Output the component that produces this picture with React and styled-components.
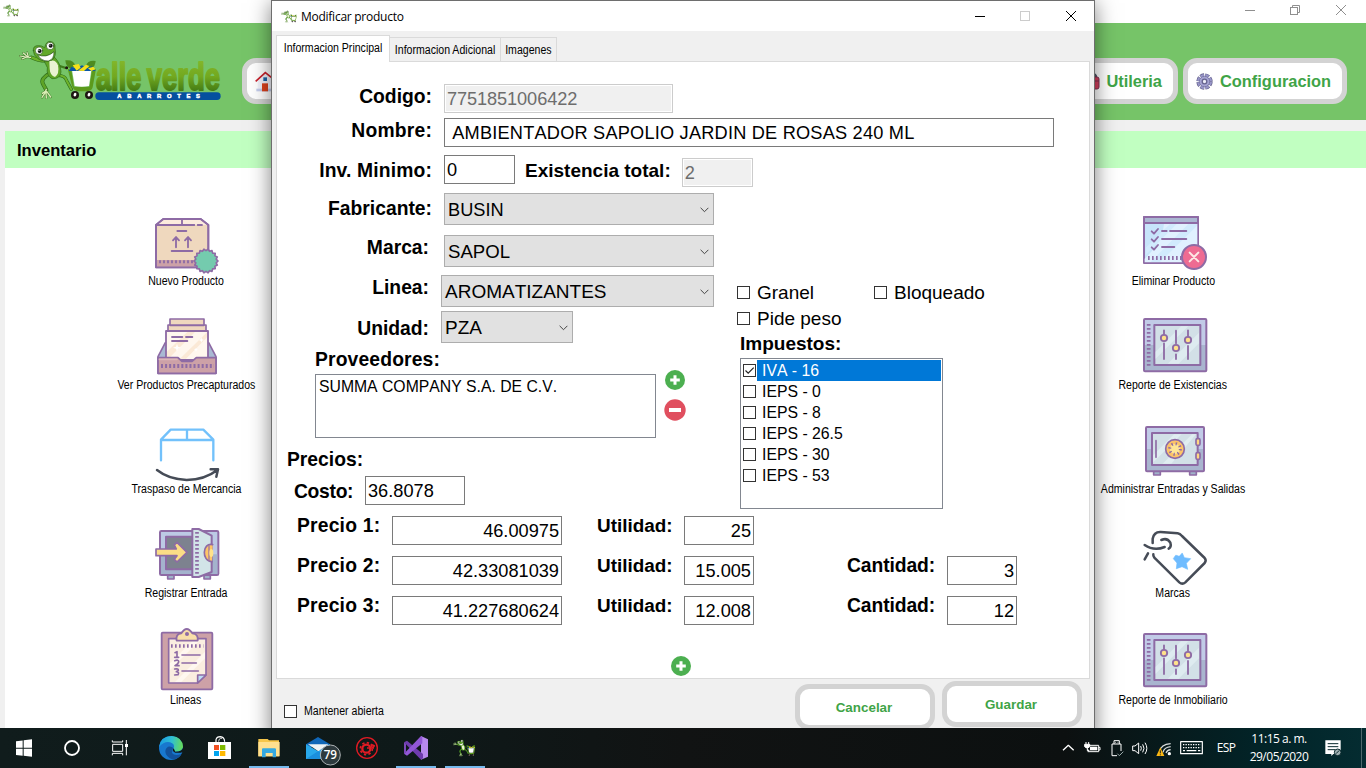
import React from "react";
import styled, { createGlobalStyle } from "styled-components";

const Global = createGlobalStyle`
  * { box-sizing: border-box; }
  body { margin: 0; overflow: hidden; font-family: "Liberation Sans", Arial, sans-serif; color: #000; }
  svg { display: block; flex: none; }
`;

/* ---------- window frame ---------- */
const Screen = styled.div`
  width: 1366px; height: 768px; position: relative; overflow: hidden;
  display: flex; flex-direction: column; background: #f0f0f0;
`;
const MainTitle = styled.div`
  height: 23px; flex: none; background: #fff; display: flex; justify-content: space-between; padding-left: 3px;
`;
const Header = styled.header`
  height: 97px; flex: none; background: #76c468; display: flex; align-items: flex-start; padding: 17px 19px 0 18px;
`;
const NavButton = styled.div`
  height: 46px; width: ${p => p.$w}px; margin: 18px 0 0 ${p => p.$ml || 0}px; flex: none;
  border: 5px solid #d3d3d3; border-radius: 14px; background: #fff;
  display: flex; align-items: center; justify-content: ${p => p.$end ? "flex-end" : "flex-start"};
  padding: 0 11px 0 8px; gap: ${p => p.$gap || 6}px;
  font-weight: bold; font-size: 16.4px; color: #3fa447; white-space: nowrap;
`;
const Spacer = styled.div`flex: 1;`;
const Page = styled.main`
  margin: 11px 0 0 5px; height: 597px; flex: none; background: #fff; display: flex; flex-direction: column;
`;
const PageTitle = styled.h1`
  margin: 0; height: 37px; flex: none; background: #c1ffc1; padding-left: 12px; line-height: 39px; font-size: 16.6px;
`;
const Columns = styled.div`
  flex: 1; display: flex; justify-content: space-between; padding: 41px 93px 0 81px; min-height: 0;
`;
const Column = styled.div`width: 200px; display: flex; flex-direction: column; align-items: center;`;
const Tile = styled.div`
  height: 104px; flex: none; margin-top: ${p => p.$mt || 0}px; display: flex; flex-direction: column; align-items: center;
  svg { overflow: visible; }
`;
const Small = styled.span`
  display: inline-block; font-size: 12px; line-height: 16px; white-space: nowrap;
  transform: scaleX(.88); transform-origin: ${p => p.$origin || "center"};
`;

/* ---------- dialog ---------- */
const Dialog = styled.section`
  position: absolute; left: 271px; top: 0; width: 824px; height: 740px;
  border: 1px solid #6e6e6e; background: #f0f0f0; box-shadow: 0 3px 20px rgba(0,0,0,.5);
  display: flex; flex-direction: column;
`;
const DialogTitle = styled.div`
  height: 30px; background: #fff; display: flex; align-items: center; padding-left: 9px; flex: none;
  font-family: "Open Sans", "Noto Sans", sans-serif; font-size: 12px; letter-spacing: -.26px;
  span { margin-left: 4px; flex: 1; }
`;
const Tabs = styled.div`height: 30px; padding: 4px 0 0 4px; display: flex; align-items: flex-end; flex: none;`;
const Tab = styled.div`
  width: ${p => p.$w}px; height: ${p => p.$on ? 27 : 24}px; border: 1px solid #dadada; border-bottom: 0;
  border-left-width: ${p => p.$on ? 1 : 0}px; margin-bottom: ${p => p.$on ? -1 : 0}px;
  background: ${p => p.$on ? "#fff" : "#f0f0f0"}; position: relative; z-index: 1;
  display: flex; justify-content: center; align-items: center; padding-bottom: ${p => p.$on ? 2 : 0}px;
`;
const Panel = styled.div`
  margin: 0 4px; height: 618px; background: #fff; border: 1px solid #dadada; padding-top: 22px; flex: none;
`;
const Footer = styled.div`
  height: 61px; display: flex; align-items: flex-start; padding: 0 12px; flex: none;
`;
const KeepOpen = styled.div`display: flex; align-items: center; gap: 7px; height: 16px; margin-top: 24px;`;
const FooterButton = styled.div`
  width: 140px; height: 46px; margin: ${p => p.$mt}px 0 0 ${p => p.$ml}px; border: 5px solid #d3d3d3;
  border-radius: 14px; background: #fff; display: flex; align-items: center; justify-content: center;
  padding-right: 2px; font-weight: bold; font-size: 13.4px; color: #3fa447;
`;

/* ---------- form parts ---------- */
const Row = styled.div`display: flex; align-items: flex-start; margin-top: ${p => p.$mt || 0}px;`;
const Label = styled.div`
  width: ${p => (p.$w ? p.$w + "px" : "auto")}; margin: ${p => p.$mt || 0}px ${p => p.$mr || 0}px 0 ${p => p.$ml || 0}px;
  text-align: ${p => (p.$left ? "left" : "right")}; font-weight: bold; font-size: ${p => p.$fs || 19.3}px;
  height: 22px; line-height: 24px; white-space: nowrap; flex: none; letter-spacing: ${p => p.$ls || 0}px;
`;
const Input = styled.div`
  width: ${p => p.$w}px; height: 29px; margin: ${p => p.$mt || 0}px 0 0 ${p => p.$ml || 0}px; flex: none;
  border: 1px solid ${p => (p.$off ? "#cccccc" : "#7a7a7a")}; background: ${p => (p.$off ? "#f0f0f0" : "#fff")};
  box-shadow: ${p => (p.$off ? "inset 0 0 0 1px #fff" : "none")};
  color: ${p => (p.$off ? "#6d6d6d" : "#000")}; padding: 0 2px; line-height: 28px; white-space: pre;
  font-size: 18.2px; font-kerning: none; text-align: ${p => (p.$right ? "right" : "left")};
  letter-spacing: ${p => p.$ls || 0}px;
`;
const SelectBox = styled.div`
  width: ${p => p.$w}px; height: 32px; border: 1px solid #adadad; background: #e1e1e1; flex: none;
  display: flex; align-items: flex-start; justify-content: space-between; padding: 0 4px 0 3px;
  font-size: ${p => p.$fs || 18.6}px; font-kerning: none; line-height: 32px;
  svg { margin-top: 13px; }
`;
const Split = styled.div`display: flex; margin-top: 10px; height: 274px;`;
const Left = styled.div`width: 460px;`;
const Right = styled.div`padding-top: 47px;`;
const ListBox = styled.div`
  width: 341px; height: 64px; margin: 4px 0 0 38px; border: 1px solid #828790; padding: 2px 3px; flex: none;
  font-size: 15.75px; line-height: 20px; font-kerning: none;
`;
const IconStack = styled.div`display: flex; flex-direction: column; align-items: center; gap: 9px; margin-left: 8px;`;
const CheckLine = styled.div`
  display: flex; height: ${p => p.$h || 26}px; width: ${p => (p.$w ? p.$w + "px" : "auto")};
  font-size: 19px; line-height: 22px; gap: 7px; white-space: nowrap;
  svg { margin-top: 4px; }
`;
const CheckList = styled.div`
  width: 203px; height: 151px; margin: 4px 0 0 3px; border: 1px solid #828790; padding: 1px 1px 0 2px;
`;
const CheckItem = styled.div`
  display: flex; height: 21px; align-items: center; font-size: 15.8px; font-kerning: none; gap: 1px;
  span { flex: 1; padding-left: 5px; line-height: 21px; background: ${p => (p.$on ? "#0078d7" : "transparent")}; color: ${p => (p.$on ? "#fff" : "#000")}; }
`;
const Prices = styled.div`display: flex; flex-direction: column; gap: 11px; margin: 7px 0 0 20px;`;
const AddPrice = styled.div`margin: 31px 0 0 394px;`;

/* ---------- taskbar ---------- */
const Taskbar = styled.footer`
  height: 40px; flex: none; position: relative; z-index: 2; display: flex; color: #fff;
  background: linear-gradient(90deg, #101c1c 0, #0e1919 30%, #111313 50%, #0c1010 78%, #022327 92%, #042c31 100%);
`;
const Slot = styled.div`
  width: ${p => p.$w}px; height: 40px; margin-left: ${p => p.$ml || 0}px; flex: none;
  background: ${p => (p.$open ? "linear-gradient(#76b9ed, #76b9ed) 4px 38px / 40px 2px no-repeat" : "none")};
`;
const Lang = styled.div`
  width: 32px; flex: none; text-align: center; font: 12px/40px "Open Sans", "Noto Sans", sans-serif; letter-spacing: -.7px;
`;
const Clock = styled.div`
  width: 70px; flex: none; margin: 0 5px 0 2px; padding-top: 2px; text-align: center; white-space: nowrap;
  font: 12px/18px "Open Sans", "Noto Sans", sans-serif; letter-spacing: -.5px;
`;
const PeekLine = styled.div`margin-left: 12px; width: 5px; border-left: 1px solid #4d6a6d;`;

/* ---------- drawings ---------- */
const P = "#8e6ba5";
const Art = ({ w = 64, h = 64, vb, children }) => (
  <svg width={w} height={h} viewBox={vb} fill="none" strokeLinecap="round" strokeLinejoin="round">{children}</svg>
);

const FrogCart = () => (
  <g strokeLinecap="round" strokeLinejoin="round">
    <path d="M145 182 Q118 184 94 172" stroke="#2f6d1a" strokeWidth="11" fill="none" />
    <path d="M145 182 Q118 184 94 172" stroke="#6eb32b" strokeWidth="7" fill="none" />
    <path d="M92 172 L78 171 L60 168 M80 171 L66 177 M82 170 L70 159 M85 170 L81 157" stroke="#3b6f22" strokeWidth="6" fill="none" />
    <path d="M92 172 L78 171 L60 168 M80 171 L66 177 M82 170 L70 159 M85 170 L81 157" stroke="#e8f3c8" strokeWidth="3.4" fill="none" />
    <path d="M150 220 Q120 236 129 252 L139 270" stroke="#2f6d1a" strokeWidth="12" fill="none" />
    <path d="M150 220 Q120 236 129 252 L139 270" stroke="#5fa427" strokeWidth="8" fill="none" />
    <path d="M139 268 L134 280 L126 292 M138 276 L139 294 M140 274 L152 291 M136 274 L127 280" stroke="#3b6f22" strokeWidth="6.5" fill="none" />
    <path d="M139 268 L134 280 L126 292 M138 276 L139 294 M140 274 L152 291 M136 274 L127 280" stroke="#dbeeb6" strokeWidth="4" fill="none" />
    <path d="M172 226 Q196 226 200 242 L214 268" stroke="#2f6d1a" strokeWidth="10" fill="none" />
    <path d="M172 226 Q196 226 200 242 L214 268" stroke="#6eb32b" strokeWidth="6" fill="none" />
    <path d="M172 196 L198 204" stroke="#3f7d1d" strokeWidth="7" />
    <path d="M132 180 Q142 174 164 172 Q182 190 183 216 Q180 238 156 236 Q138 226 142 204Z" fill="#5fa427" stroke="#2f6d1a" strokeWidth="2" />
    <path d="M148 184 Q166 176 174 196 Q179 222 165 231 Q150 226 149 206Z" fill="#eaf2d2" />
    <path d="M100 152 Q98 136 116 137 Q124 136 134 143 Q138 124 150 124 Q166 126 165 144 Q170 170 156 180 Q132 188 114 176 Q100 166 100 152Z" fill="#62a92a" stroke="#2d6519" strokeWidth="2" />
    <path d="M113 164 Q138 176 162 155 Q163 178 145 183 Q123 184 113 164Z" fill="#fff" stroke="#254d18" strokeWidth="2" />
    <circle cx="117" cy="152" r="11" fill="#fff" stroke="#2d5a1b" strokeWidth="2" />
    <circle cx="150" cy="138" r="11" fill="#fff" stroke="#2d5a1b" strokeWidth="2" />
    <circle cx="119" cy="153" r="6" fill="#111" /><circle cx="152" cy="137" r="6" fill="#111" />
    <circle cx="117" cy="151" r="1.8" fill="#fff" /><circle cx="150" cy="135" r="1.8" fill="#fff" />
    <path d="M196 181 Q222 178 226 198 L210 206 Q197 198 196 181Z M287 183 Q262 180 258 198 L274 208 Q286 198 287 183Z" fill="#4e8c1f" />
    <path d="M203 206 L216 258 Q220 272 236 274 L262 274 Q276 272 278 262 L288 206 L276 210 L268 260 L222 260 L214 210Z" fill="#5c9a1c" />
    <path d="M216 210 L274 210 L267 258 Q245 262 224 258Z" fill="#fff" />
    <path d="M206 213 L214 201 L230 204 L246 196 L262 204 L276 199 L287 213Z" fill="#0b56a4" />
    <path d="M218 196 L236 192 L242 203 L230 212Z M234 212 L258 194 L268 198 L252 213Z M264 205 L280 200 L286 208 L274 213Z" fill="#f6e019" />
    <circle cx="200" cy="203" r="4.5" fill="#20170f" />
    <g fill="#1d1712"><ellipse cx="225" cy="285" rx="12" ry="12" /><ellipse cx="267" cy="285" rx="12" ry="12" /></g>
    <g fill="#fff"><ellipse cx="225" cy="284" rx="4" ry="5.5" transform="rotate(25 225 284)" /><ellipse cx="267" cy="284" rx="4" ry="5.5" transform="rotate(25 267 284)" /></g>
  </g>
);

const Logo = () => (
  <svg width="206" height="62" viewBox="54 120 618 186" overflow="visible">
    <defs>
      <linearGradient id="lg" x1="0" y1="185" x2="0" y2="275" gradientUnits="userSpaceOnUse">
        <stop offset="0" stopColor="#82b52a" /><stop offset=".5" stopColor="#72a81f" /><stop offset="1" stopColor="#417a14" />
      </linearGradient>
    </defs>
    <FrogCart />
    <g fill="url(#lg)" stroke="url(#lg)" strokeWidth="6" strokeLinejoin="round" fontFamily="Liberation Sans" fontWeight="bold" fontSize="117">
      <text x="288" y="270" textLength="136" lengthAdjust="spacingAndGlyphs">alle</text>
      <text x="440" y="270" textLength="220" lengthAdjust="spacingAndGlyphs">verde</text>
    </g>
    <rect x="286" y="277" width="376" height="23" rx="11" fill="#05509f" />
    <text x="352" y="294" textLength="248" fill="#fff" stroke="#fff" strokeWidth="1.4" fontFamily="Liberation Sans" fontWeight="bold" fontSize="17.500">ABARROTES</text>
  </svg>
);

const MiniFrog = () => <svg width="16" height="13" viewBox="54 116 240 188"><FrogCart /></svg>;

const BoxIcon = () => {
  const pts = Array.from({ length: 36 }, (_, i) => {
    const a = (i * Math.PI) / 18, r = i % 2 ? 31 : 36;
    return `${318 + r * Math.cos(a)},${183 + r * Math.sin(a)}`;
  }).join(" ");
  return (
    <Art vb="162 27 192 192">
      <path d="M168 75 L190 57 H302 L325 75 V202 H168Z" fill="#efd8be" stroke={P} strokeWidth="5.500" />
      <path d="M171 75 L191 60 H301 L322 75Z" fill="#fcebdd" />
      <path d="M170 180 H322 V200 H170Z" fill="#cda1a7" />
      <path d="M168 75 L190 57 H302 L325 75 V202 H168Z M168 75 H283 M293 75 H306 M246 58 V74 M232 93 H259 M215 153 H277 M228 142 V112 M219 121 L228 111 L237 121 M264 142 V112 M255 121 L264 111 L273 121" stroke={P} strokeWidth="5.500" />
      <path d="M180 181 V190 M192 181 V190 M204 181 V190 M216 181 V190 M228 181 V190 M240 181 V190 M252 181 V190 M264 181 V190 M276 181 V190" stroke={P} strokeWidth="5.500" strokeLinecap="butt" />
      <polygon points={pts} fill="#74cbae" stroke={P} strokeWidth="5" />
    </Art>
  );
};
const TrayIcon = () => (
  <Art vb="162 339 192 192">
    <path d="M196 428 L174 470 V520 H348 V470 L326 428Z" fill="#a9b9d3" stroke={P} strokeWidth="5" />
    <path d="M210 357 H312 V376 H210Z M204 375 H318 V394 H204Z" fill="#efd8be" stroke={P} strokeWidth="5" />
    <path d="M198 393 H324 V480 H198Z" fill="#fff7ee" stroke={P} strokeWidth="5.500" />
    <path d="M201 455 L262 396 H285 L205 476 H201Z M240 476 L321 397 V412 L258 476Z" fill="#fbe9d6" />
    <path d="M174 473 H234 L246 484 H276 L289 473 H348 V520 H174Z" fill="#cda1a7" stroke={P} strokeWidth="5.500" />
    <path d="M178 478 H231" stroke="#dbb5b8" strokeWidth="5" />
    <path d="M216 411 H247 M258 411 H277 M216 423 H262" stroke={P} strokeWidth="5.500" />
    <path d="M231 431 L234 440 L243 443 L234 446 L231 455 L228 446 L219 443 L228 440Z M304 412 l2 6 6 2 -6 2 -2 6 -2-6 -6-2 6-2Z M288 443l2 4 4 2-4 2-2 4-2-4-4-2 4-2Z" fill="#fff" />
    <path d="M183 498 H342" stroke={P} strokeWidth="12" strokeDasharray="6 6.200" strokeLinecap="butt" />
  </Art>
);
const TransferIcon = () => (
  <Art vb="162 21 192 192">
    <path d="M183 151 V89 L212 59 H310 L340 89 V151 M184 90 H339 M261 60 V88" stroke="#72c1fb" strokeWidth="7" />
    <path d="M171 180 Q206 208 260 210 Q315 209 352 180 M332 178 L354 178 L349 200" stroke="#464c57" strokeWidth="7.500" />
  </Art>
);
const EntryIcon = () => (
  <Art vb="162 333 192 192">
    <path d="M203 496 V507 H222 V496 M312 496 V507 H331 V496" fill="#9fb2c9" stroke={P} strokeWidth="5" />
    <rect x="180" y="363" width="175" height="132" rx="4" fill="#bccae5" stroke={P} strokeWidth="6" />
    <path d="M183 433 H352 V492 H183Z" fill="#a4b3cd" />
    <rect x="198" y="380" width="84" height="98" fill="#7d828f" stroke={P} strokeWidth="6" />
    <path d="M277 357 H296 L335 377 V486 L296 501 H277Z" fill="#d2e4e8" stroke={P} strokeWidth="6" />
    <path d="M291 366 V496" stroke={P} strokeWidth="11" strokeDasharray="5 7" strokeLinecap="butt" />
    <path d="M338 404 C306 396 304 455 336 455" fill="#ffc567" stroke={P} strokeWidth="5" />
    <path d="M327 408 V450" stroke="#9d76a4" strokeWidth="4" />
    <ellipse cx="334" cy="429" rx="6" ry="12" fill="#ffe28a" />
    <path d="M168 417 H229 L223 405 L231 397 L261 427 L231 456 L223 448 L231 437 H168Z" fill="#fbdd86" stroke={P} strokeWidth="5" />
  </Art>
);
const ClipIcon = () => (
  <Art vb="162 654 192 192">
    <rect x="185" y="668" width="152" height="170" rx="3" fill="#cda1a7" stroke={P} strokeWidth="5.500" />
    <path d="M206 686 H318 V795 L293 819 H206Z" fill="#faeee0" stroke={P} strokeWidth="5" />
    <path d="M210 760 L280 690 H300 L210 780Z M225 816 L315 725 V745 L244 816Z" fill="#fff8f0" />
    <path d="M293 819 V795 H318Z" fill="#bcdcf5" stroke={P} strokeWidth="5" />
    <path d="M213 708 H310" stroke={P} strokeWidth="11" strokeDasharray="5 7" strokeLinecap="butt" />
    <path d="M230 692 Q226 672 244 670 Q260 644 277 670 Q296 672 293 692Z" fill="#f9dea9" stroke={P} strokeWidth="5.500" />
    <circle cx="261" cy="672" r="6" fill={P} />
    <path d="M246 735 H300 M246 759 H289 M246 783 H295 M225 728 L231 725 V742 M224 742 H236 M224 752 Q236 748 236 755 Q236 760 225 767 H237 M224 777 Q236 775 235 781 L229 785 Q239 787 234 794 L224 795" stroke={P} strokeWidth="5" />
  </Art>
);
const DeleteIcon = () => (
  <Art vb="153 27 192 192">
    <rect x="162" y="51" width="162" height="138" fill="#c7e4fa" stroke={P} strokeWidth="6" />
    <path d="M222 72 H322 V187 H164 V176 Q220 125 222 72Z M165 172 L264 72" fill="#e0f1ff" />
    <path d="M167 165 L260 72 H240 L167 143Z M210 186 L321 77 V72 H295 L182 186Z" fill="#d1eafd" />
    <rect x="162" y="51" width="162" height="18" fill="#aab7d2" stroke={P} strokeWidth="6" />
    <path d="M185 94 L192 101 L204 87 M185 118 L192 125 L204 111 M185 142 L192 149 L204 135 M216 93 H230 M240 93 H289 M216 117 H289 M216 141 H253" stroke={P} strokeWidth="5.500" />
    <path d="M174 174 H276" stroke={P} strokeWidth="12" strokeDasharray="5 7" strokeLinecap="butt" />
    <circle cx="312" cy="171" r="36" fill="#ee6b92" stroke={P} strokeWidth="6" />
    <path d="M299 158 L325 184 M325 158 L299 184" stroke="#fde9e5" strokeWidth="6" />
  </Art>
);
const SlidersIcon = () => (
  <Art vb="153 339 192 192">
    <rect x="162" y="357" width="187" height="157" rx="3" fill="#c1cbe7" />
    <path d="M162 435 H349 V514 H162Z" fill="#a9b5cf" />
    <rect x="162" y="357" width="187" height="157" rx="3" stroke={P} strokeWidth="6" />
    <rect x="193" y="375" width="138" height="120" fill="#d2e0e7" stroke={P} strokeWidth="6" />
    <path d="M197 455 L273 379 H295 L197 476Z M233 491 L327 398 V430 L266 491Z" fill="#deebf0" />
    <path d="M176 372 V502" stroke={P} strokeWidth="11" strokeDasharray="5 7" strokeLinecap="butt" />
    <path d="M222 391 V402 M222 430 V477 M258 392 V430 M258 463 V477 M294 391 V408 M294 438 V477" stroke={P} strokeWidth="5.500" />
    <g fill="#ffe18a" stroke={P} strokeWidth="5.500"><circle cx="222" cy="414" r="9.500" /><circle cx="258" cy="444" r="9.500" /><circle cx="294" cy="420" r="9.500" /></g>
  </Art>
);
const SafeIcon = () => (
  <Art vb="153 21 192 192">
    <path d="M191 186 V195 H211 V186 M299 186 V195 H319 V186" fill="#9fb2c9" stroke={P} strokeWidth="5" />
    <rect x="168" y="51" width="174" height="133" rx="3" fill="#c1cbe7" />
    <path d="M168 117 H342 V184 H168Z" fill="#a9b5cf" />
    <rect x="168" y="51" width="174" height="133" rx="3" stroke={P} strokeWidth="6" />
    <rect x="186" y="69" width="137" height="96" fill="#d2e0e7" stroke={P} strokeWidth="6" />
    <path d="M190 135 L252 73 H275 L190 157Z M218 161 L306 73 H318 L244 161Z" fill="#e0edf1" />
    <path d="M198 92 V142" stroke={P} strokeWidth="5" />
    <circle cx="255" cy="117" r="28" fill="#fdc468" stroke={P} strokeWidth="5" />
    <circle cx="255" cy="117" r="15" fill="#ffe695" />
    <circle cx="255" cy="117" r="16" stroke={P} strokeWidth="9" strokeDasharray="4 8.570" strokeLinecap="butt" />
    <rect x="318" y="86" width="12" height="20" rx="4" fill="#ffd781" stroke={P} strokeWidth="5" />
    <rect x="318" y="128" width="12" height="20" rx="4" fill="#ffd781" stroke={P} strokeWidth="5" />
  </Art>
);
const TagIcon = () => (
  <Art vb="153 333 192 192">
    <path d="M188 399 V386 Q192 365 212 366 L263 370 Q270 371 276 378 L344 444 Q350 451 344 459 L286 517 Q277 525 268 517 L193 443 Q189 438 190 433" stroke="#464c57" strokeWidth="7.500" />
    <path d="M164 405 Q192 424 224 411 M214 390 Q232 382 241 398 Q245 411 236 416 M174 430 L164 448" stroke="#464c57" strokeWidth="7.500" />
    <path d="M277 430 L283 443 L302 446 L289 460 L293 478 L276 470 L259 476 L261 459 L250 446 L256 437 Q256 434 267 439Z" fill="#6fbcff" stroke="#6fbcff" strokeWidth="2" />
  </Art>
);
const Plus = () => (
  <svg width="20" height="20" viewBox="0 0 20 20"><circle cx="10" cy="10" r="10" fill="#4caf50" /><path d="M10 5.200V14.800M5.200 10H14.800" stroke="#fff" strokeWidth="3" /></svg>
);
const Minus = () => (
  <svg width="22" height="22" viewBox="0 0 22 22"><circle cx="11" cy="11" r="10.700" fill="#e04f5f" /><path d="M5 11H17" stroke="#fff" strokeWidth="4" /></svg>
);
const Check = ({ on }) => (
  <svg width="13" height="13" viewBox="0 0 13 13" fill="none"><rect x=".5" y=".5" width="12" height="12" fill="#fff" stroke="#333" />{on && <path d="M2.500 6.500L5.200 9.200L10.700 3.700" stroke="#222" strokeWidth="1.200" />}</svg>
);
const Arrow = () => <svg width="9" height="6" viewBox="0 0 9 6" fill="none"><path d="M.6 .8L4.500 4.700L8.400 .8" stroke="#444" /></svg>;

const Controls = ({ dialog }) => dialog ? (
  <svg width="138" height="30" viewBox="956 1 138 30" fill="none" stroke="#000">
    <path d="M975 16.500H985M1066 11L1076 21M1076 11L1066 21" /><rect x="1020.500" y="11.500" width="9" height="9" stroke="#ccc" />
  </svg>
) : (
  <svg width="138" height="23" viewBox="1228 0 138 23" fill="none" stroke="#8f8f8f">
    <path d="M1245 10.500H1255M1336 5L1346 15M1346 5L1336 15M1292.500 7V5.500H1299.500V12.500H1298" /><rect x="1290.500" y="7.500" width="7" height="7" />
  </svg>
);
const House = () => (
  <svg width="22" height="22" viewBox="762 212 66 66" fill="none">
    <path d="M770 242L794 222L818 242V272H770Z" fill="#f3f3fb" /><path d="M766 268H828V276H766Z" fill="#c5cdec" />
    <path d="M764 246L793 220L826 246" stroke="#c9202c" strokeWidth="5" /><rect x="787" y="234" width="11" height="11" fill="#1c64a8" />
    <rect x="783" y="252" width="18" height="24" fill="#dd421d" />
  </svg>
);
const ToolBox = () => (
  <svg width="18" height="18" viewBox="0 0 18 18"><path d="M4 5C4 1 14 1 14 5" fill="none" stroke="#4e5566" strokeWidth="2.500" /><rect x="0" y="5" width="17" height="12" rx="2" fill="#d8405f" stroke="#813052" /><path d="M0 9H17" stroke="#813052" /></svg>
);
const Gear = () => (
  <svg width="17" height="17" viewBox="349 220 52 52" fill="none">
    <circle cx="375" cy="246" r="19" stroke="#5e5b86" strokeWidth="12" strokeDasharray="11.500 3.420" />
    <circle cx="375" cy="246" r="19" stroke="#9896c8" strokeWidth="8" strokeDasharray="10 4.920" strokeDashoffset="-.7" />
    <circle cx="375" cy="246" r="16" fill="#a5a3d2" stroke="#7c7aa8" strokeWidth="3" /><circle cx="375" cy="246" r="7" fill="#eeeef8" stroke="#66648f" strokeWidth="4" />
  </svg>
);

const T = ({ x, w, children }) => (
  <svg width={w} height="40" viewBox={`${x * 3} 9 ${w * 3} 120`} fill="none" strokeLinejoin="round">{children}</svg>
);

const LEFT = [
  ["Nuevo Producto", BoxIcon], ["Ver Productos Precapturados", TrayIcon], ["Traspaso de Mercancia", TransferIcon],
  ["Registrar Entrada", EntryIcon], ["Lineas", ClipIcon],
];
const RIGHT = [
  ["Eliminar Producto", DeleteIcon], ["Reporte de Existencias", SlidersIcon], ["Administrar Entradas y Salidas", SafeIcon],
  ["Marcas", TagIcon], ["Reporte de Inmobiliario", SlidersIcon],
];
const Tiles = ({ items }) => (
  <Column>
    {items.map(([text, Icon], i) => (
      <Tile key={text} $mt={i === 4 ? 3 : 0}><Icon /><Small>{text}</Small></Tile>
    ))}
  </Column>
);

const PRICES = [["1", "46.00975", "25"], ["2", "42.33081039", "15.005", "3"], ["3", "41.227680624", "12.008", "12"]];
const TAXES = ["IVA - 16", "IEPS - 0", "IEPS - 8", "IEPS - 26.5", "IEPS - 30", "IEPS - 53"];

const ProductDialog = () => (
  <Dialog>
    <DialogTitle><MiniFrog /><span>Modificar producto</span><Controls dialog /></DialogTitle>
    <Tabs>
      <Tab $w={114} $on><Small>Informacion Principal</Small></Tab>
      <Tab $w={111}><Small>Informacion Adicional</Small></Tab>
      <Tab $w={56}><Small>Imagenes</Small></Tab>
    </Tabs>
    <Panel>
      <Row><Label $w={155} $mt={1} $mr={12}>Codigo:</Label><Input $w={229} $off $ls={-0.1}>7751851006422</Input></Row>
      <Row $mt={5}><Label $w={155} $mt={1} $mr={12} $ls={0.2}>Nombre:</Label><Input $w={610} $ls={0.2}> AMBIENTADOR SAPOLIO JARDIN DE ROSAS 240 ML</Input></Row>
      <Row $mt={8}>
        <Label $w={155} $mt={4} $mr={12} $ls={0.15}>Inv. Minimo:</Label><Input $w={71}>0</Input>
        <Label $mt={4} $ml={10} $mr={11} $fs={19}>Existencia total:</Label><Input $w={71} $mt={3} $off>2</Input>
      </Row>
      <Row $mt={6}><Label $w={155} $mt={4} $mr={12}>Fabricante:</Label><SelectBox $w={270} $fs={18.2}>BUSIN<Arrow /></SelectBox></Row>
      <Split>
        <Left>
          <Row><Label $w={152} $mt={1} $mr={15}>Marca:</Label><SelectBox $w={270}>SAPOL<Arrow /></SelectBox></Row>
          <Row $mt={8}><Label $w={152} $mt={1} $mr={12}>Linea:</Label><SelectBox $w={273} $fs={19}>AROMATIZANTES<Arrow /></SelectBox></Row>
          <Row $mt={4}><Label $w={152} $mt={6} $mr={12}>Unidad:</Label><SelectBox $w={132} $fs={19}>PZA<Arrow /></SelectBox></Row>
          <Row $mt={5}><Label $left $ml={38} $ls={0.15}>Proveedores:</Label></Row>
          <Row>
            <ListBox>SUMMA COMPANY S.A. DE C.V.</ListBox>
            <IconStack><Plus /><Minus /></IconStack>
          </Row>
          <Row $mt={10}><Label $left $ml={10}>Precios:</Label></Row>
          <Row $mt={6}><Label $left $w={71} $mt={4} $ml={17} $ls={-0.3}>Costo:</Label><Input $w={100}>36.8078</Input></Row>
        </Left>
        <Right>
          <Row><CheckLine $w={137}><Check />Granel</CheckLine><CheckLine><Check />Bloqueado</CheckLine></Row>
          <CheckLine $h={24}><Check />Pide peso</CheckLine>
          <Label $left $ml={3} $fs={19}>Impuestos:</Label>
          <CheckList>
            {TAXES.map((t, i) => <CheckItem key={t} $on={i === 0}><Check on={i === 0} /><span>{t}</span></CheckItem>)}
          </CheckList>
        </Right>
      </Split>
      <Prices>
        {PRICES.map(([n, price, profit, qty]) => (
          <Row key={n}>
            <Label $left $w={95} $mt={-2} $ls={0.2}>Precio {n}:</Label><Input $w={170} $right>{price}</Input>
            <Label $left $w={87} $mt={-2} $ml={35} $fs={18.9}>Utilidad:</Label><Input $w={70} $right>{profit}</Input>
            {qty && <><Label $left $w={100} $mt={-2} $ml={93} $ls={-0.1}>Cantidad:</Label><Input $w={70} $right>{qty}</Input></>}
          </Row>
        ))}
      </Prices>
      <AddPrice><Plus /></AddPrice>
    </Panel>
    <Footer>
      <KeepOpen><Check /><Small $origin="left">Mantener abierta</Small></KeepOpen>
      <Spacer />
      <FooterButton $mt={5} $ml={0}>Cancelar</FooterButton>
      <FooterButton $mt={2} $ml={7}>Guardar</FooterButton>
    </Footer>
  </Dialog>
);

const StoreGlyph = () => (
  <><path d="M648 52V44Q650 35 661 35Q673 36 674 50" stroke="#fff" strokeWidth="3.500" /><path d="M656 50Q657 38 666 40" stroke="#fff" strokeWidth="2.500" />
    <path d="M624 51H693V102H624Z" fill="#fff" /><path d="M642 60H657V75H642Z" fill="#f25022" /><path d="M660 60H676V75H660Z" fill="#7fba00" /><path d="M642 78H657V93H642Z" fill="#00a4ef" /><path d="M660 78H676V93H660Z" fill="#ffb900" /></>
);

const TaskbarView = () => (
  <Taskbar>
    <Slot $w={48}><T x={0} w={48}><path d="M48 49L68 46.500V68H48ZM71 46L96 43V68H71ZM48 71H68V92.500L48 90ZM71 71H96V95L71 92.500Z" fill="#fff" /></T></Slot>
    <Slot $w={48}><T x={48} w={48}><circle cx="216" cy="69" r="21" stroke="#fff" strokeWidth="5.500" /></T></Slot>
    <Slot $w={48}><T x={96} w={48}><path d="M337 46V51H368V46M337 91V85H368V91M338 58H368V79H338ZM379 45V91" stroke="#fff" strokeWidth="3" strokeLinejoin="miter" /><rect x="375" y="57" width="9" height="9" fill="#fff" /></T></Slot>
    <Slot $w={49} $ml={3}><T x={147} w={49}>
      <defs><linearGradient id="edge" gradientUnits="userSpaceOnUse" x1="480" y1="50" x2="549" y2="60"><stop stopColor="#1b9de2" /><stop offset=".5" stopColor="#30c0d0" /><stop offset="1" stopColor="#68dc55" /></linearGradient></defs>
      <circle cx="513" cy="69" r="36" fill="#1878cf" />
      <path d="M477 66Q482 33 515 33Q548 36 549 66Q546 80 526 80Q516 76 521 70Q526 57 510 52Q493 48 477 66Z" fill="url(#edge)" />
      <path d="M521 70Q514 78 526 83Q542 85 549 80V101L549 69Q546 80 526 80Z" fill="#101a1a" />
      <path d="M521 70Q514 62 504 65Q492 73 498 88Q507 104 524 103Q540 98 544 87Q524 94 516 84Q514 76 521 70Z" fill="#12529d" />
    </T></Slot>
    <Slot $w={49}><T x={196} w={49}><StoreGlyph /></T></Slot>
    <Slot $w={49} $open><T x={245} w={49}><path d="M775 42H803L807 46H837V94H775Z" fill="#f6c64b" /><path d="M779 51H839V94H775V51Z" fill="#ffe08f" /><path d="M786 97V72Q786 70 789 70H824Q828 70 828 73V97H818V84H797V97Z" fill="#35a9e1" /></T></Slot>
    <Slot $w={49}><T x={294} w={49}><path d="M918 58L954 36L990 58V66H918Z" fill="#1067b8" /><path d="M918 58L953 78L990 58V102H918Z" fill="#29a8ea" /><path d="M924 58H985L955 79Z" fill="#eef3f5" /><path d="M918 102L955 78L990 102Z" fill="#1b8fdc" />
      <circle cx="991" cy="90" r="30" fill="#2e3a3e" stroke="#c9cdcf" strokeWidth="2.500" /><text x="991" y="102" textAnchor="middle" fill="#fff" fontFamily="Open Sans" fontWeight="600" fontSize="35">79</text></T></Slot>
    <Slot $w={49}><T x={343} w={49}><circle cx="1101" cy="69" r="31" stroke="#e01b24" strokeWidth="4" /><circle cx="1099" cy="71" r="12" stroke="#e01b24" strokeWidth="7" /><circle cx="1099" cy="71" r="18" stroke="#e01b24" strokeWidth="5" strokeDasharray="7 7" /><path d="M1101 69H1122M1112 58L1123 62L1117 70" stroke="#e01b24" strokeWidth="5" /></T></Slot>
    <Slot $w={49} $open><T x={392} w={49}><path d="M1263 33L1284 43V95L1263 104Z" fill="#b889ee" /><path d="M1212 52L1221 47L1269 87V100L1263 104Z" fill="#6f3cae" /><path d="M1212 86L1263 33L1267 36V55L1221 92Z" fill="#9157d6" /><path d="M1212 52L1218 57V81L1212 86Z" fill="#7d49bb" /></T></Slot>
    <Slot $w={49} $open><T x={441} w={49}><svg x="1358" y="42" width="70" height="54" viewBox="54 116 240 188"><FrogCart /></svg></T></Slot>
    <Spacer />
    <T x={15} w={24}><path d="M66 76L82 61L98 76" stroke="#fff" strokeWidth="4" /></T>
    <T x={39} w={24}><path d="M140 61H173V80H140M173 67H177V75H173" stroke="#fff" strokeWidth="3" /><path d="M147 65H169V76H147Z" fill="#fff" /><path d="M131 58H146V65Q139 74 131 65ZM135 51V57M143 51V57M139 70V77H145" stroke="#fff" strokeWidth="3" fill="#fff" /></T>
    <T x={63} w={24}><path d="M219 57V47H235V57M213 57H240V78M213 57V92H228M223 52H225M230 52H232" stroke="#fff" strokeWidth="3" /><path d="M229 86L235 92L247 80" stroke="#9aa" strokeWidth="3" /></T>
    <T x={87} w={24}><path d="M275 63H282L293 54V86L282 77H275ZM299 63Q303 70 299 77M305 58Q313 70 305 82M312 53Q323 70 312 87" stroke="#fff" strokeWidth="3" /></T>
    <T x={111} w={24}><path d="M356 80Q359 58 389 56M366 82Q369 67 389 65M375 84Q378 75 389 74" stroke="#d8dcdd" strokeWidth="3.500" /><circle cx="385" cy="86" r="5" fill="#fff" /><path d="M346 93L358 67L370 93Z" fill="#fcb813" /><path d="M358 76V85M358 88V91" stroke="#222" strokeWidth="3" /></T>
    <T x={135} w={34}><rect x="419" y="50" width="65" height="36" stroke="#fff" strokeWidth="3.500" /><path d="M426 59H479M426 68H479" stroke="#fff" strokeWidth="4" strokeDasharray="4 3.500" /><path d="M426 77H432M437 77H466M471 77H478" stroke="#fff" strokeWidth="4" /></T>
    <Lang>ESP</Lang>
    <Clock>11:15 a. m.<br />29/05/2020</Clock>
    <T x={279} w={30}><path d="M856 46H902V87H880L874 93V87H856Z" fill="#fff" /><path d="M863 56H895M863 65H895M863 74H885" stroke="#0a2a2e" strokeWidth="3" /><circle cx="893" cy="82" r="10" fill="#9fb0b2" stroke="#0a2a2e" strokeWidth="3" /><path d="M888 86L898 76" stroke="#0a2a2e" strokeWidth="3" /></T>
    <PeekLine />
  </Taskbar>
);

export default function App() {
  return (
    <Screen>
      <Global />
      <MainTitle><Row $mt={4}><MiniFrog /></Row><Controls /></MainTitle>
      <Header>
        <Logo />
        <NavButton $w={150} $ml={18}><House />Inicio</NavButton>
        <Spacer />
        <NavButton $w={150} $end><ToolBox />Utileria</NavButton>
        <NavButton $w={164} $ml={5} $gap={7}><Gear />Configuracion</NavButton>
      </Header>
      <Page>
        <PageTitle>Inventario</PageTitle>
        <Columns><Tiles items={LEFT} /><Tiles items={RIGHT} /></Columns>
      </Page>
      <ProductDialog />
      <TaskbarView />
    </Screen>
  );
}
